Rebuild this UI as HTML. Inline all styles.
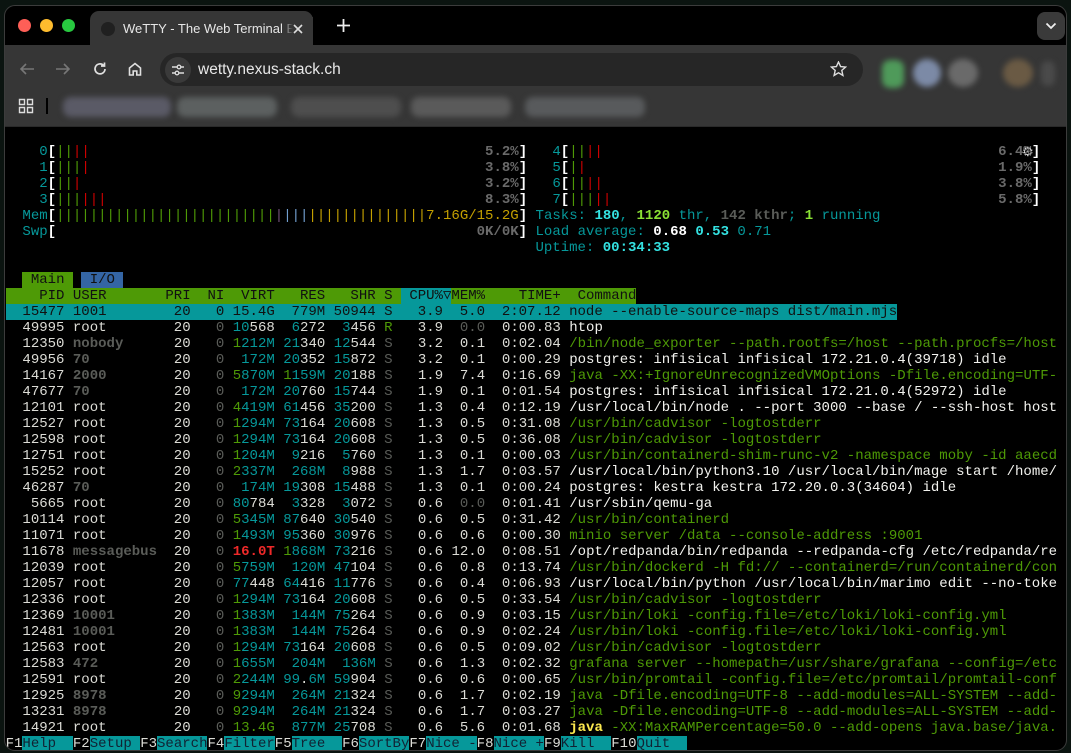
<!DOCTYPE html>
<html><head><meta charset="utf-8"><style>
*{margin:0;padding:0;box-sizing:border-box}
body{width:1071px;height:753px;background:#0b1410;overflow:hidden;position:relative;font-family:"Liberation Sans",sans-serif}
.win{position:absolute;left:4px;top:5px;width:1063px;height:746px;border-radius:11px;background:#000;overflow:hidden;border:1px solid #3c3c3c}
.tb{position:absolute;left:0;top:39px;width:100%;height:81px;background:#363636}
.tab{position:absolute;left:85px;top:5px;width:223px;height:36px;background:#363636;border-radius:9px 9px 0 0}
.tab .t{position:absolute;left:33px;top:10px;color:#e6e6e6;font-size:13px;white-space:nowrap;width:180px;overflow:hidden}
.dot{position:absolute;top:13px;width:13px;height:13px;border-radius:50%}
.pill{position:absolute;left:155px;top:47px;width:703px;height:33px;background:#262626;border-radius:17px}
.url{position:absolute;left:193px;top:55px;color:#e8e8e8;font-size:15.5px}
.blur{position:absolute;filter:blur(3px);border-radius:8px}
pre{position:absolute;left:0.6px;top:138px;font-family:"Liberation Mono",monospace;font-size:14.03px;line-height:16px;color:#dcdcd6;white-space:pre}
.c{color:#06989a}.C{color:#34e2e2;font-weight:bold}.g{color:#4e9a06}.G{color:#8ae234;font-weight:bold}
.k{color:#5a5c58}.K{color:#5a5c58;font-weight:bold}.r{color:#cc0000}.R{color:#ef2929;font-weight:bold}
.y{color:#c4a000}.Y{color:#fce94f;font-weight:bold}.b{color:#729fcf}.m{color:#75507b}
.W{color:#f2f2ee}.B{color:#fff;font-weight:bold}.p{color:#6a6a6a;font-weight:bold}
.sel{background:#06989a;color:#111}
.hg{background:#4e9a06;color:#111}.hc{background:#06989a;color:#111}.hb{background:#3465a4;color:#111}
.fk{background:#06989a;color:#123}
.ib{display:inline-block}
</style></head><body>
<div class="win">
  <div class="dot" style="left:13px;background:#fe5f57"></div>
  <div class="dot" style="left:35px;background:#febc2e"></div>
  <div class="dot" style="left:57px;background:#28c840"></div>
  <div class="tab">
    <div style="position:absolute;left:11px;top:11px;width:14px;height:14px;border-radius:50%;background:#202020"></div>
    <div class="t">WeTTY - The Web Terminal Em</div>
    <div style="position:absolute;left:192px;top:6px;width:31px;height:24px;background:linear-gradient(90deg,rgba(54,54,54,0),#363636 35%)"></div>
    <svg style="position:absolute;left:203px;top:13px" width="10" height="10"><path d="M1 1L9 9M9 1L1 9" stroke="#ddd" stroke-width="1.6"/></svg>
  </div>
  <svg style="position:absolute;left:332px;top:13px" width="13" height="13"><path d="M6.5 0V13M0 6.5H13" stroke="#eee" stroke-width="1.8"/></svg>
  <div style="position:absolute;left:1032px;top:6px;width:28px;height:28px;border-radius:8px;background:#3a3a3a"></div>
  <svg style="position:absolute;left:1040px;top:16px" width="12" height="8"><path d="M1.5 1.5L6 6L10.5 1.5" stroke="#eee" stroke-width="1.8" fill="none"/></svg>
  <div class="tb"></div>
  <div style="position:absolute;left:0;top:39px;width:100%;height:2px;background:#363636"></div>
  <svg style="position:absolute;left:14px;top:56px" width="16" height="14"><path d="M15 7H2M7 2L2 7L7 12" stroke="#777" stroke-width="1.6" fill="none"/></svg>
  <svg style="position:absolute;left:50px;top:56px" width="16" height="14"><path d="M1 7H14M9 2L14 7L9 12" stroke="#777" stroke-width="1.6" fill="none"/></svg>
  <svg style="position:absolute;left:87px;top:55px" width="16" height="16"><path d="M13 8A5 5 0 1 1 11.5 4.3M12.5 1.5V5H9" stroke="#e0e0e0" stroke-width="1.7" fill="none"/></svg>
  <svg style="position:absolute;left:122px;top:55px" width="16" height="16"><path d="M2.5 14V7L8 2.5L13.5 7V14H9.8V10H6.2V14Z" stroke="#e0e0e0" stroke-width="1.6" fill="none"/></svg>
  <div class="pill"></div>
  <div style="position:absolute;left:160px;top:51px;width:26px;height:26px;border-radius:50%;background:#3a3a3a"></div>
  <svg style="position:absolute;left:166px;top:57px" width="14" height="14"><path d="M1 4H6M10 4H13M1 10H4M8 10H13" stroke="#ddd" stroke-width="1.5"/><circle cx="8" cy="4" r="1.8" stroke="#ddd" fill="none" stroke-width="1.3"/><circle cx="6" cy="10" r="1.8" stroke="#ddd" fill="none" stroke-width="1.3"/></svg>
  <div class="url">wetty.nexus-stack.ch</div>
  <svg style="position:absolute;left:825px;top:55px" width="17" height="16"><path d="M8.5 1L10.6 5.6L15.6 6.1L11.8 9.4L12.9 14.4L8.5 11.8L4.1 14.4L5.2 9.4L1.4 6.1L6.4 5.6Z" stroke="#ddd" stroke-width="1.4" fill="none"/></svg>
  <div class="blur" style="left:877px;top:54px;width:22px;height:28px;background:#4f9a5a"></div>
  <div class="blur" style="left:908px;top:53px;width:28px;height:28px;border-radius:50%;background:#7c8aa6"></div>
  <div class="blur" style="left:943px;top:53px;width:30px;height:28px;border-radius:50%;background:#6a6a6a"></div>
  <div class="blur" style="left:998px;top:53px;width:30px;height:28px;border-radius:50%;background:#6a5a44"></div>
  <div class="blur" style="left:1036px;top:55px;width:14px;height:25px;background:#4a4a4a"></div>
  <svg style="position:absolute;left:13px;top:92px" width="16" height="16"><path d="M1.5 1.5H6.5V6.5H1.5ZM9.5 1.5H14.5V6.5H9.5ZM1.5 9.5H6.5V14.5H1.5ZM9.5 9.5H14.5V14.5H9.5Z" stroke="#ddd" stroke-width="1.4" fill="none"/></svg>
  <div style="position:absolute;left:41px;top:92px;width:2px;height:16px;background:#000"></div>
  <div class="blur" style="left:58px;top:91px;width:108px;height:20px;background:#5a5a66"></div>
  <div class="blur" style="left:172px;top:91px;width:100px;height:20px;background:#5c6060"></div>
  <div class="blur" style="left:286px;top:91px;width:110px;height:20px;background:#4e4e4e"></div>
  <div class="blur" style="left:406px;top:91px;width:100px;height:20px;background:#5a5a5a"></div>
  <div class="blur" style="left:520px;top:91px;width:120px;height:20px;background:#585a5c"></div>
  <div style="position:absolute;left:0;top:120px;width:100%;height:1px;background:#2a2a2a"></div>
  <div style="position:absolute;left:1017px;top:138px;color:#ddd;font-size:13px">⚙</div>
<pre><span class="ib" style="width:4ch"></span><span class="c">0</span><span class="B">[</span><span class="g">||</span><span class="r">||</span><span class="ib" style="width:47ch"></span><span class="p">5.2%</span><span class="B">]</span>   <span class="c">4</span><span class="B">[</span><span class="g">||</span><span class="r">||</span><span class="ib" style="width:47ch"></span><span class="p">6.4%</span><span class="B">]</span>
    <span class="c">1</span><span class="B">[</span><span class="g">|||</span><span class="r">|</span><span class="ib" style="width:47ch"></span><span class="p">3.8%</span><span class="B">]</span>   <span class="c">5</span><span class="B">[</span><span class="g">|</span><span class="r">|</span><span class="ib" style="width:49ch"></span><span class="p">1.9%</span><span class="B">]</span>
    <span class="c">2</span><span class="B">[</span><span class="g">||</span><span class="r">|</span><span class="ib" style="width:48ch"></span><span class="p">3.2%</span><span class="B">]</span>   <span class="c">6</span><span class="B">[</span><span class="g">||</span><span class="r">||</span><span class="ib" style="width:47ch"></span><span class="p">3.8%</span><span class="B">]</span>
    <span class="c">3</span><span class="B">[</span><span class="g">|||</span><span class="r">|||</span><span class="ib" style="width:45ch"></span><span class="p">8.3%</span><span class="B">]</span>   <span class="c">7</span><span class="B">[</span><span class="g">|||</span><span class="r">||</span><span class="ib" style="width:46ch"></span><span class="p">5.8%</span><span class="B">]</span>
  <span class="c">Mem</span><span class="B">[</span><span class="g">||||||||||||||||||||||||||</span><span class="m">|</span><span class="b">|||</span><span class="y">||||||||||||||7.16G/15.2G</span><span class="B">]</span> <span class="c">Tasks: </span><span class="C">180</span><span class="c">, </span><span class="G">1120</span><span class="c"> thr, </span><span class="K">142 kthr</span><span class="c">; </span><span class="G">1</span><span class="c"> running</span>
  <span class="c">Swp</span><span class="B">[</span><span class="ib" style="width:50ch"></span><span class="p">0K/0K</span><span class="B">]</span> <span class="c">Load average: </span><span class="B">0.68 </span><span class="C">0.53 </span><span class="c">0.71</span>
<span class="ib" style="width:63ch"></span><span class="c">Uptime: </span><span class="C">00:34:33</span>

  <span class="hg"> Main </span> <span class="hb"> I/O </span>
<span class="hg">    PID USER       PRI  NI  VIRT   RES   SHR S </span><span class="hc"> CPU%▽</span><span class="hg">MEM%    TIME+  Command</span>
<span class="sel">  15477 1001        20   0 15.4G  779M 50944 S   3.9  5.0  2:07.12 node --enable-source-maps dist/main.mjs</span>
  49995 root        20 <span class="k">  0</span> <span class="c">10</span>568 <span class="c"> 6</span>272 <span class="c"> 3</span>456 <span class="g">R</span>   3.9 <span class="k"> 0.0</span>  0:00.83 <span class="W">htop</span>
  12350 <span class="K">nobody</span>      20 <span class="k">  0</span> <span class="g">1</span><span class="c">212M</span> <span class="c">21</span>340 <span class="c">12</span>544 <span class="k">S</span>   3.2  0.1  0:02.04 <span class="g">/bin/node_exporter --path.rootfs=/host --path.procfs=/host</span>
  49956 <span class="K">70</span>          20 <span class="k">  0</span> <span class="c"> 172M</span> <span class="c">20</span>352 <span class="c">15</span>872 <span class="k">S</span>   3.2  0.1  0:00.29 <span class="W">postgres: infisical infisical 172.21.0.4(39718) idle</span>
  14167 <span class="K">2000</span>        20 <span class="k">  0</span> <span class="g">5</span><span class="c">870M</span> <span class="g">1</span><span class="c">159M</span> <span class="c">20</span>188 <span class="k">S</span>   1.9  7.4  0:16.69 <span class="g">java -XX:+IgnoreUnrecognizedVMOptions -Dfile.encoding=UTF-</span>
  47677 <span class="K">70</span>          20 <span class="k">  0</span> <span class="c"> 172M</span> <span class="c">20</span>760 <span class="c">15</span>744 <span class="k">S</span>   1.9  0.1  0:01.54 <span class="W">postgres: infisical infisical 172.21.0.4(52972) idle</span>
  12101 root        20 <span class="k">  0</span> <span class="g">4</span><span class="c">419M</span> <span class="c">61</span>456 <span class="c">35</span>200 <span class="k">S</span>   1.3  0.4  0:12.19 <span class="W">/usr/local/bin/node . --port 3000 --base / --ssh-host host</span>
  12527 root        20 <span class="k">  0</span> <span class="g">1</span><span class="c">294M</span> <span class="c">73</span>164 <span class="c">20</span>608 <span class="k">S</span>   1.3  0.5  0:31.08 <span class="g">/usr/bin/cadvisor -logtostderr</span>
  12598 root        20 <span class="k">  0</span> <span class="g">1</span><span class="c">294M</span> <span class="c">73</span>164 <span class="c">20</span>608 <span class="k">S</span>   1.3  0.5  0:36.08 <span class="g">/usr/bin/cadvisor -logtostderr</span>
  12751 root        20 <span class="k">  0</span> <span class="g">1</span><span class="c">204M</span> <span class="c"> 9</span>216 <span class="c"> 5</span>760 <span class="k">S</span>   1.3  0.1  0:00.03 <span class="g">/usr/bin/containerd-shim-runc-v2 -namespace moby -id aaecd</span>
  15252 root        20 <span class="k">  0</span> <span class="g">2</span><span class="c">337M</span> <span class="c"> 268M</span> <span class="c"> 8</span>988 <span class="k">S</span>   1.3  1.7  0:03.57 <span class="W">/usr/local/bin/python3.10 /usr/local/bin/mage start /home/</span>
  46287 <span class="K">70</span>          20 <span class="k">  0</span> <span class="c"> 174M</span> <span class="c">19</span>308 <span class="c">15</span>488 <span class="k">S</span>   1.3  0.1  0:00.24 <span class="W">postgres: kestra kestra 172.20.0.3(34604) idle</span>
   5665 root        20 <span class="k">  0</span> <span class="c">80</span>784 <span class="c"> 3</span>328 <span class="c"> 3</span>072 <span class="k">S</span>   0.6 <span class="k"> 0.0</span>  0:01.41 <span class="W">/usr/sbin/qemu-ga</span>
  10114 root        20 <span class="k">  0</span> <span class="g">5</span><span class="c">345M</span> <span class="c">87</span>640 <span class="c">30</span>540 <span class="k">S</span>   0.6  0.5  0:31.42 <span class="g">/usr/bin/containerd</span>
  11071 root        20 <span class="k">  0</span> <span class="g">1</span><span class="c">493M</span> <span class="c">95</span>360 <span class="c">30</span>976 <span class="k">S</span>   0.6  0.6  0:00.30 <span class="g">minio server /data --console-address :9001</span>
  11678 <span class="K">messagebus</span>  20 <span class="k">  0</span> <span class="R">16.0T</span> <span class="g">1</span><span class="c">868M</span> <span class="c">73</span>216 <span class="k">S</span>   0.6 12.0  0:08.51 <span class="W">/opt/redpanda/bin/redpanda --redpanda-cfg /etc/redpanda/re</span>
  12039 root        20 <span class="k">  0</span> <span class="g">5</span><span class="c">759M</span> <span class="c"> 120M</span> <span class="c">47</span>104 <span class="k">S</span>   0.6  0.8  0:13.74 <span class="g">/usr/bin/dockerd -H fd:// --containerd=/run/containerd/con</span>
  12057 root        20 <span class="k">  0</span> <span class="c">77</span>448 <span class="c">64</span>416 <span class="c">11</span>776 <span class="k">S</span>   0.6  0.4  0:06.93 <span class="W">/usr/local/bin/python /usr/local/bin/marimo edit --no-toke</span>
  12336 root        20 <span class="k">  0</span> <span class="g">1</span><span class="c">294M</span> <span class="c">73</span>164 <span class="c">20</span>608 <span class="k">S</span>   0.6  0.5  0:33.54 <span class="g">/usr/bin/cadvisor -logtostderr</span>
  12369 <span class="K">10001</span>       20 <span class="k">  0</span> <span class="g">1</span><span class="c">383M</span> <span class="c"> 144M</span> <span class="c">75</span>264 <span class="k">S</span>   0.6  0.9  0:03.15 <span class="g">/usr/bin/loki -config.file=/etc/loki/loki-config.yml</span>
  12481 <span class="K">10001</span>       20 <span class="k">  0</span> <span class="g">1</span><span class="c">383M</span> <span class="c"> 144M</span> <span class="c">75</span>264 <span class="k">S</span>   0.6  0.9  0:02.24 <span class="g">/usr/bin/loki -config.file=/etc/loki/loki-config.yml</span>
  12563 root        20 <span class="k">  0</span> <span class="g">1</span><span class="c">294M</span> <span class="c">73</span>164 <span class="c">20</span>608 <span class="k">S</span>   0.6  0.5  0:09.02 <span class="g">/usr/bin/cadvisor -logtostderr</span>
  12583 <span class="K">472</span>         20 <span class="k">  0</span> <span class="g">1</span><span class="c">655M</span> <span class="c"> 204M</span> <span class="c"> 136M</span> <span class="k">S</span>   0.6  1.3  0:02.32 <span class="g">grafana server --homepath=/usr/share/grafana --config=/etc</span>
  12591 root        20 <span class="k">  0</span> <span class="g">2</span><span class="c">244M</span> <span class="c">99</span>.<span class="c">6M</span> <span class="c">59</span>904 <span class="k">S</span>   0.6  0.6  0:00.65 <span class="g">/usr/bin/promtail -config.file=/etc/promtail/promtail-conf</span>
  12925 <span class="K">8978</span>        20 <span class="k">  0</span> <span class="g">9</span><span class="c">294M</span> <span class="c"> 264M</span> <span class="c">21</span>324 <span class="k">S</span>   0.6  1.7  0:02.19 <span class="g">java -Dfile.encoding=UTF-8 --add-modules=ALL-SYSTEM --add-</span>
  13231 <span class="K">8978</span>        20 <span class="k">  0</span> <span class="g">9</span><span class="c">294M</span> <span class="c"> 264M</span> <span class="c">21</span>324 <span class="k">S</span>   0.6  1.7  0:03.27 <span class="g">java -Dfile.encoding=UTF-8 --add-modules=ALL-SYSTEM --add-</span>
  14921 root        20 <span class="k">  0</span> <span class="g">13.4G</span> <span class="c"> 877M</span> <span class="c">25</span>708 <span class="k">S</span>   0.6  5.6  0:01.68 <span class="Y">java</span><span class="g"> -XX:MaxRAMPercentage=50.0 --add-opens java.base/java.</span>
F1<span class="fk">Help  </span>F2<span class="fk">Setup </span>F3<span class="fk">Search</span>F4<span class="fk">Filter</span>F5<span class="fk">Tree  </span>F6<span class="fk">SortBy</span>F7<span class="fk">Nice -</span>F8<span class="fk">Nice +</span>F9<span class="fk">Kill  </span>F10<span class="fk">Quit  </span></pre>
</div>
</body></html>
